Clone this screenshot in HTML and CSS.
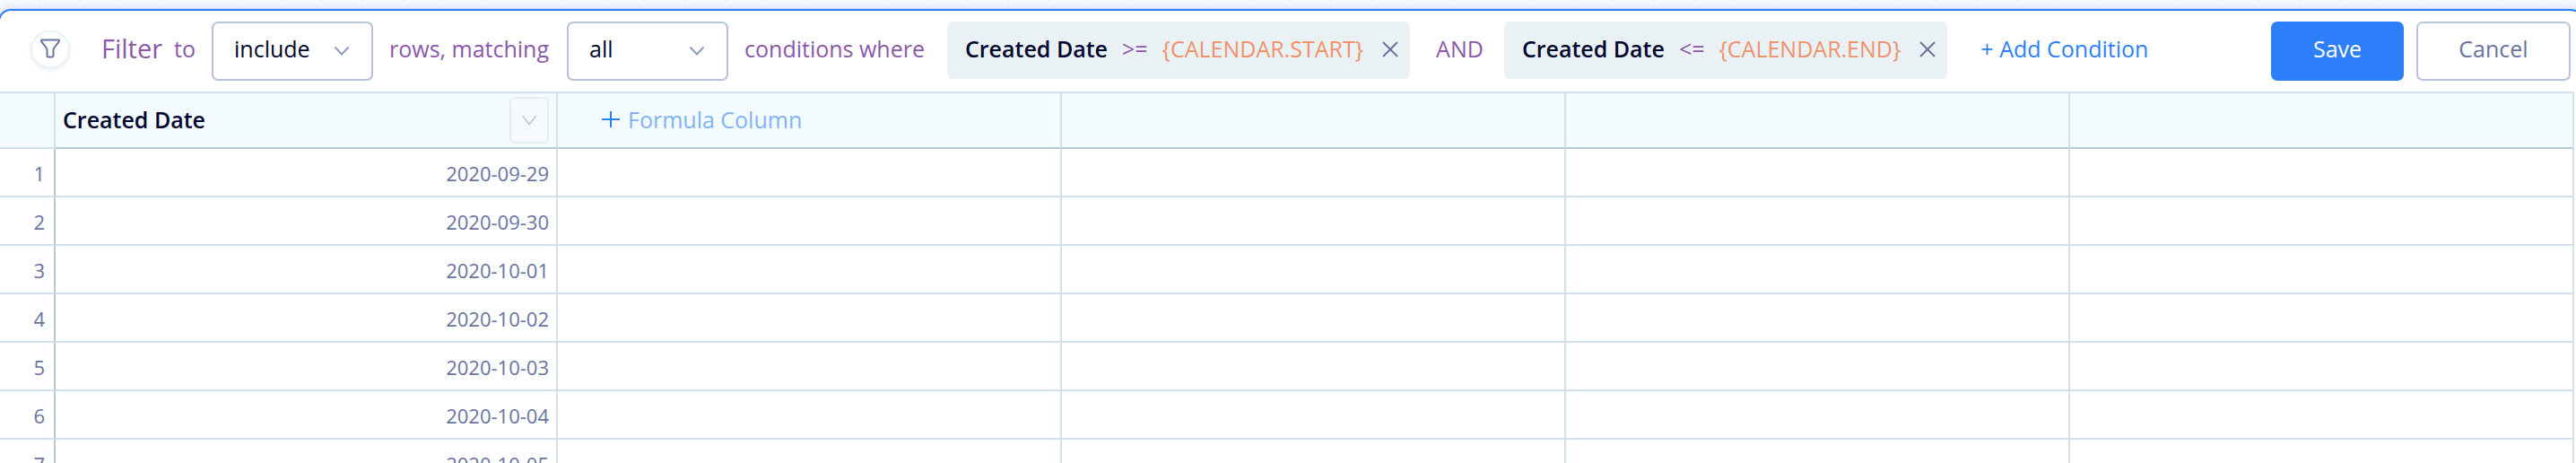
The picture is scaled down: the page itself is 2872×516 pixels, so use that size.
FILE: index.html
```html
<!DOCTYPE html>
<html lang="en">
<head>
<meta charset="utf-8">
<title>Filter rows</title>
<link rel="stylesheet" href="styles.css">
</head>
<body>
<main class="panel">
  <form class="toolbar">
    <span class="filter-icon">
      <svg width="24" height="24" viewBox="0 0 24 24" fill="none" stroke="currentColor" stroke-width="2" stroke-linejoin="round"><path d="M2.500 2.500h19c.5 0 .7.600.5 1.100-.8 3-6.500 7-6.500 9.900v6.500a1.500 1.500 0 0 1-1.500 1.500h-4a1.500 1.500 0 0 1-1.500-1.500v-6.500c0-2.900-5.700-6.900-6.500-9.900-.2-.5 0-1.100.5-1.100z"/></svg>
    </span>
    <span class="title">Filter</span>
    <label class="word to" for="mode">to</label>
    <span class="picker">
      <select id="mode"><option>include</option><option>exclude</option></select>
      <svg class="chevron" width="18" height="12" viewBox="0 0 18 12"><path d="M1.500 1.500L9 9.500l7.500-8"/></svg>
    </span>
    <label class="word matching" for="match">rows, matching</label>
    <span class="picker">
      <select id="match"><option>all</option><option>any</option></select>
      <svg class="chevron" width="18" height="12" viewBox="0 0 18 12"><path d="M1.500 1.500L9 9.500l7.500-8"/></svg>
    </span>
    <span class="word where">conditions where</span>
    <span class="chip">
      <b>Created Date</b><span class="op">&gt;=</span><span class="value">{CALENDAR.START}</span>
      <button type="button" class="remove" aria-label="Remove condition"><svg width="18" height="18" viewBox="0 0 18 18"><path d="M1 1l16 16M17 1L1 17"/></svg></button>
    </span>
    <span class="word and">AND</span>
    <span class="chip">
      <b>Created Date</b><span class="op">&lt;=</span><span class="value">{CALENDAR.END}</span>
      <button type="button" class="remove" aria-label="Remove condition"><svg width="18" height="18" viewBox="0 0 18 18"><path d="M1 1l16 16M17 1L1 17"/></svg></button>
    </span>
    <button type="button" class="add">+ Add Condition</button>
    <span class="actions">
      <button type="submit" class="btn save">Save</button>
      <button type="button" class="btn cancel">Cancel</button>
    </span>
  </form>
  <table class="grid">
    <colgroup><col class="col-num"><col class="col-date"><col><col><col><col></colgroup>
    <thead>
      <tr>
        <th class="num"></th>
        <th><div class="head"><span>Created Date</span><button type="button" class="menu" aria-label="Column menu"><svg width="18" height="12" viewBox="0 0 18 12"><path d="M1.500 1L9 10.500 16.500 1"/></svg></button></div></th>
        <th><button type="button" class="formula"><svg width="20" height="20" viewBox="0 0 20 20"><path d="M10 1v18M0 10h20"/></svg>Formula Column</button></th>
        <th></th><th></th><th></th>
      </tr>
    </thead>
    <tbody>
      <tr><td class="num">1</td><td>2020-09-29</td><td></td><td></td><td></td><td></td></tr>
      <tr><td class="num">2</td><td>2020-09-30</td><td></td><td></td><td></td><td></td></tr>
      <tr><td class="num">3</td><td>2020-10-01</td><td></td><td></td><td></td><td></td></tr>
      <tr><td class="num">4</td><td>2020-10-02</td><td></td><td></td><td></td><td></td></tr>
      <tr><td class="num">5</td><td>2020-10-03</td><td></td><td></td><td></td><td></td></tr>
      <tr><td class="num">6</td><td>2020-10-04</td><td></td><td></td><td></td><td></td></tr>
      <tr><td class="num">7</td><td>2020-10-05</td><td></td><td></td><td></td><td></td></tr>
    </tbody>
  </table>
</main>
</body>
</html>
```

FILE: styles.css
```css
:root {
  --blue: #2d7ff9;
  --purple: #8b58a9;
  --ink: #00062e;
  --slate: #69749f;
  --line: #d3e0ea;
  --line-strong: #b8cad8;
  --outline: #b7c0da;
}

* { box-sizing: border-box; }

body {
  margin: 0;
  height: 100vh;
  overflow: hidden;
  padding-top: 10px;
  background: repeating-linear-gradient(90deg, transparent 0 43px, #f2f3f8 43px 45px) 0 0 / 100% 2px no-repeat, #fafbff;
  font-family: "Open Sans", "Noto Sans", sans-serif;
  font-size: 25px;
  color: var(--ink);
}

button, select { font: inherit; line-height: normal; color: inherit; margin: 0; }
button { border: 0; background: none; padding: 0; cursor: pointer; }
svg { display: block; }

/* The panel bleeds past both window edges. */
.panel {
  margin: 0 -8px 0 -2px;
  border: 2px solid var(--blue);
  border-radius: 14px 14px 0 0;
  background: #fff;
  box-shadow: 0 0 12px rgba(80, 110, 190, 0.3);
}

.toolbar {
  display: flex;
  align-items: flex-start;
  padding: 12px 12px 12px 34px;
  line-height: 60px;
  white-space: nowrap;
}

.filter-icon {
  display: grid;
  place-items: center;
  width: 44px;
  height: 42px;
  margin: 10px 35px 0 0;
  border: 2px solid #e9f1f5;
  border-radius: 22px;
  color: var(--slate);
  box-shadow: 0 2px 4px rgba(40, 60, 110, 0.1);
}
.filter-icon svg { margin-bottom: 2px; }

.title { font-size: 29px; color: var(--purple); }
.word { color: var(--purple); padding: 0 18px; }
.to { padding-left: 13px; }
.matching { padding-right: 20px; }
.where { padding-right: 25px; }
.and { padding: 0 23px 0 29px; }

.picker { display: grid; align-items: center; width: 180px; }
.picker > * { grid-area: 1 / 1; }
.picker select {
  appearance: none;
  width: 100%;
  height: 66px;
  padding: 0 50px 6px 23px;
  border: 2px solid var(--outline);
  border-top-color: var(--line-strong);
  border-radius: 7px;
  background: #fff;
}
.chevron { justify-self: end; margin-right: 26px; pointer-events: none; }
.chevron path { fill: none; stroke: #8f9bc0; stroke-width: 2; }

.chip {
  display: flex;
  height: 64px;
  padding: 0 13px 0 20px;
  border-radius: 6px;
  background: #e9f1f5;
}
.chip b { font-weight: 600; }
.op { color: var(--purple); padding: 0 16px; }
.value { color: #f0916a; }
.remove { align-self: flex-start; height: 62px; margin-left: 21px; }
.remove path { stroke: var(--slate); stroke-width: 2; }

.add { height: 60px; margin-left: 37px; color: var(--blue); }

.actions { display: flex; gap: 14px; margin-left: auto; }
.btn { height: 66px; padding-bottom: 6px; border-radius: 7px; }
.save { width: 148px; background: var(--blue); color: #fff; }
.cancel {
  width: 172px;
  border: 2px solid var(--outline);
  border-top-color: var(--line-strong);
  color: var(--slate);
}

.grid {
  width: calc(100% - 8px);
  table-layout: fixed;
  border-spacing: 0;
  border-top: 2px solid var(--line);
}
.col-num { width: 62px; }
.col-date { width: 560px; }

th, td {
  padding: 0 8px;
  border-right: 2px solid var(--line);
  border-bottom: 2px solid var(--line);
}
th {
  height: 62px;
  border-bottom-color: var(--line-strong);
  background: #f3fbff;
  font-weight: 600;
  text-align: left;
}
th.num { border-bottom-color: var(--line); }
td {
  height: 54px;
  padding-top: 2px;
  color: var(--slate);
  font-size: 22px;
  text-align: right;
}
td.num { padding-right: 10px; border-right-color: var(--line-strong); }

.head { display: flex; justify-content: space-between; line-height: 50px; }
.menu {
  display: grid;
  place-items: center;
  width: 44px;
  height: 52px;
  border: 2px solid #e3edf4;
  border-radius: 6px;
  background: #f6faff;
}
.menu path { fill: none; stroke: #c5cbdf; stroke-width: 2; }

.formula {
  display: flex;
  align-items: center;
  gap: 9px;
  height: 52px;
  padding: 0 0 2px 41px;
  color: #81b3fc;
  font-weight: 400;
}
.formula path { stroke: var(--blue); stroke-width: 2; }
```
